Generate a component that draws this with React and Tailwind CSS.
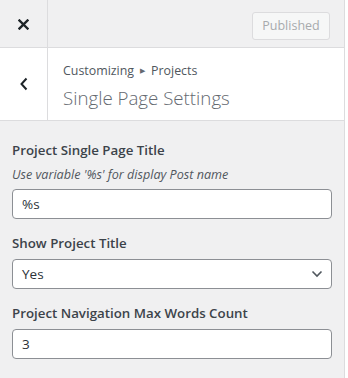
import React from "react";

const font = { fontFamily: '"Open Sans", "Noto Sans", sans-serif' };

const Field = ({ label, desc, children, last }) => (
  <div className={last ? "" : "mb-[14px]"}>
    <div className="text-[13.3px] leading-[20px] font-semibold text-[#3c434a]">{label}</div>
    {desc && (
      <div className="mt-[6px] text-[12.6px] leading-[18px] italic text-[#50575e]">{desc}</div>
    )}
    <div className={desc ? "mt-[5px]" : "mt-[6px]"}>{children}</div>
  </div>
);

const TextInput = ({ value }) => (
  <div className="h-[30px] w-full rounded-[4px] border border-[#8c8f94] bg-white px-[9px] flex items-center text-[13.5px] text-[#2c3338]">
    {value}
  </div>
);

export default function App() {
  return (
    <div className="w-[348px] h-[378px] bg-white flex overflow-hidden" style={font}>
      <div className="w-[345px] h-full border-r border-[#dcdcde] bg-[#f0f0f1] flex flex-col">
        {/* top bar */}
        <div className="h-[48px] shrink-0 flex border-b border-[#dcdcde] bg-[#f0f0f1]">
          <div className="w-[48px] h-full border-r border-[#dcdcde] flex items-center justify-center">
            <svg width="11" height="11" viewBox="0 0 11 11" className="mt-[2px]">
              <path d="M1.5 1.5 L9.5 9.5 M9.5 1.5 L1.5 9.5" stroke="#1d2327" strokeWidth="2.4" strokeLinecap="square" />
            </svg>
          </div>
          <div className="flex-1 flex items-start justify-end pr-[14px] pt-[12px]">
            <div className="h-[28px] w-[78px] justify-center rounded-[3px] border border-[#dcdcde] bg-[#f6f7f7] text-[12.5px] text-[#a7aaad] flex items-center">
              Published
            </div>
          </div>
        </div>

        {/* section header */}
        <div className="h-[73px] shrink-0 flex bg-white border-b border-[#dcdcde]">
          <div className="w-[48px] h-full border-r border-[#dcdcde] flex items-center justify-center">
            <svg width="10" height="14" viewBox="0 0 10 14">
              <path d="M7.5 1.5 L2.5 7 L7.5 12.5" fill="none" stroke="#1d2327" strokeWidth="2" />
            </svg>
          </div>
          <div className="flex-1 pl-[15px] pt-[13px]">
            <div className="text-[12.4px] leading-[20px] text-[#50575e] flex items-center">
              Customizing
              <span className="mx-[6px] text-[7px] text-[#646970]">▶</span>
              Projects
            </div>
            <div className="mt-[4px] text-[18.7px] leading-[26px] font-light text-[#646970]">
              Single Page Settings
            </div>
          </div>
        </div>

        {/* controls */}
        <div className="px-[12px] pt-[19px]">
          <Field label="Project Single Page Title" desc="Use variable '%s' for display Post name">
            <TextInput value="%s" />
          </Field>
          <Field label="Show Project Title">
            <div className="h-[30px] w-full rounded-[4px] border border-[#8c8f94] bg-white pl-[9px] pr-[8px] flex items-center justify-between text-[13.5px] text-[#2c3338]">
              <span>Yes</span>
              <svg width="12" height="8" viewBox="0 0 12 8">
                <path d="M1.5 1.5 L6 6 L10.5 1.5" fill="none" stroke="#50575e" strokeWidth="1.6" />
              </svg>
            </div>
          </Field>
          <Field label="Project Navigation Max Words Count" last>
            <TextInput value="3" />
          </Field>
        </div>
      </div>
    </div>
  );
}
